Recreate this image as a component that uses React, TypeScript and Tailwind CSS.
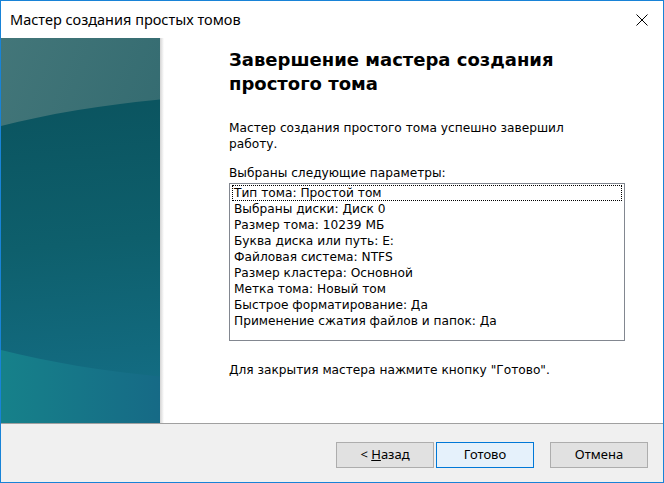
const params = [
  'Тип тома: Простой том',
  'Выбраны диски: Диск 0',
  'Размер тома: 10239 МБ',
  'Буква диска или путь: E:',
  'Файловая система: NTFS',
  'Размер кластера: Основной',
  'Метка тома: Новый том',
  'Быстрое форматирование: Да',
  'Применение сжатия файлов и папок: Да',
]

function SidePanel() {
  return (
    <svg width="159" height="385" viewBox="0 0 159 385" className="block">
      <defs>
        <linearGradient id="top" x1="0" y1="0" x2="1" y2="1">
          <stop offset="0" stopColor="#437679" />
          <stop offset="1" stopColor="#2b656c" />
        </linearGradient>
        <linearGradient id="bottom" x1="0" y1="0" x2="1" y2="0">
          <stop offset="0" stopColor="#16818a" />
          <stop offset="1" stopColor="#166a86" />
        </linearGradient>
        <linearGradient id="blob" x1="0" y1="0" x2="0.3" y2="1">
          <stop offset="0" stopColor="#0a525d" />
          <stop offset="0.55" stopColor="#0e5f6c" />
          <stop offset="1" stopColor="#136c82" />
        </linearGradient>
      </defs>
      <rect width="159" height="385" fill="url(#top)" />
      <rect y="200" width="159" height="185" fill="url(#bottom)" />
      <ellipse cx="300" cy="200" rx="473" ry="145" fill="url(#blob)" />
    </svg>
  )
}

function Button({ children, primary }: { children: React.ReactNode; primary?: boolean }) {
  return (
    <button
      className={
        primary
          ? 'w-[98px] h-[26px] border border-[#0078d7] bg-[#e5f1fb] text-[13px] text-black'
          : 'w-[98px] h-[26px] border border-[#adadad] bg-[#e1e1e1] text-[13px] text-black'
      }
    >
      {children}
    </button>
  )
}

export default function App() {
  return (
    <div
      className="w-[664px] h-[483px] border border-[#1883d7] bg-white flex flex-col overflow-hidden"
      style={{ fontFamily: '"Noto Sans", "Liberation Sans", sans-serif' }}
    >
      {/* Title bar */}
      <div className="h-[37px] flex items-center justify-between pl-[9px] pr-[15px] shrink-0">
        <span className="text-[14.5px] text-black">Мастер создания простых томов</span>
        <svg width="12" height="12" viewBox="0 0 12 12">
          <path d="M0.5 0.5 L11.5 11.5 M11.5 0.5 L0.5 11.5" stroke="#000" strokeWidth="1" />
        </svg>
      </div>

      {/* Body */}
      <div className="flex h-[385px] shrink-0">
        <SidePanel />
        <div className="w-[4px] bg-gradient-to-r from-[#d4d4d4] to-white" />
        <div
          className="flex flex-col pl-[65px] text-[12.2px] text-black"
          style={{ fontFamily: 'Tahoma, "DejaVu Sans", sans-serif' }}
        >
          <h1
            className="pt-[10px] text-[18px] leading-[24px] font-bold"
            style={{ fontFamily: 'Verdana, "DejaVu Sans", sans-serif' }}
          >
            Завершение мастера создания
            <br />
            простого тома
          </h1>
          <p className="mt-[24px] leading-[16px] w-[360px]">
            Мастер создания простого тома успешно завершил работу.
          </p>
          <p className="mt-[13px] leading-[16px]">Выбраны следующие параметры:</p>
          <div className="mt-[2px] w-[396px] h-[158px] border border-[#828790] px-[2px] pt-[1px]">
            {params.map((p, i) => (
              <div
                key={p}
                className={
                  i === 0
                    ? 'h-[16px] leading-[14px] pl-[1px] border border-dotted border-black'
                    : 'h-[16px] leading-[16px] pl-[2px]'
                }
              >
                {p}
              </div>
            ))}
          </div>
          <p className="mt-[21px] leading-[16px]">Для закрытия мастера нажмите кнопку "Готово".</p>
        </div>
      </div>

      {/* Footer */}
      <div className="flex-1 bg-[#f0f0f0] border-t border-[#a0a0a0] flex items-start pt-[18px] pl-[335px]">
        <Button>
          &lt; <span className="underline">Н</span>азад
        </Button>
        <div className="w-[2px]" />
        <Button primary>Готово</Button>
        <div className="w-[16px]" />
        <Button>Отмена</Button>
      </div>
    </div>
  )
}
